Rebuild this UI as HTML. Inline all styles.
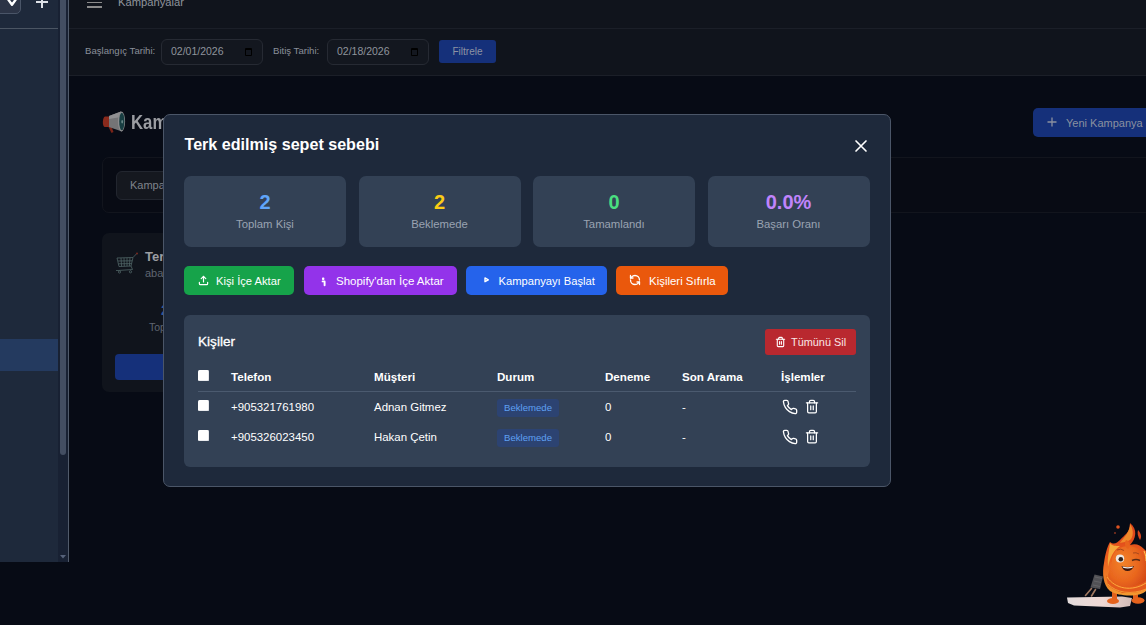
<!DOCTYPE html>
<html><head><meta charset="utf-8">
<style>
*{box-sizing:border-box;margin:0;padding:0}
html,body{width:1146px;height:625px;overflow:hidden;background:#070b15;font-family:"Liberation Sans",sans-serif}
.abs{position:absolute}
/* main (dimmed) */
#hdr{left:69px;top:0;width:1077px;height:28px;background:#10141c}
#hline{left:69px;top:28px;width:1077px;height:1px;background:#1b1f28}
#fbar{left:69px;top:29px;width:1077px;height:46px;background:#10141c}
#fline{left:69px;top:75px;width:1077px;height:1px;background:#1b1f28}
.lbl{color:#8a8f99;font-size:9.6px;white-space:nowrap}
.dinp{height:26px;border:1px solid #262a33;border-radius:6px;background:#13171f;color:#8f949c;font-size:10.5px;padding-left:9px;line-height:23px}
.dinp i{position:absolute;right:10px;top:8px;width:7px;height:8px;border:1.5px solid #000;border-top-width:2.5px;border-radius:1px}
#filt{left:439px;top:40px;width:57px;height:23px;background:#15307a;border-radius:3px;color:#8d93a3;font-size:10px;text-align:center;line-height:23px}
#ptitle{left:131px;top:111px;color:#9b9da2;font-size:19.5px;font-weight:bold;white-space:nowrap;transform:scaleX(.86);transform-origin:0 0}
#newbtn{left:1033px;top:108px;width:130px;height:29px;background:#15307a;border-radius:5px;color:#8a90a0;font-size:11px;line-height:30px}
#scard{left:102px;top:157px;width:1100px;height:56px;border:1px solid #12151d;border-radius:7px;background:#080b14}
#sinp{left:116px;top:171px;width:200px;height:29px;border:1px solid #22262f;border-radius:6px;background:#15181f;color:#7f838b;font-size:11px;line-height:27px;padding-left:13px}
#ccard{left:102px;top:233px;width:200px;height:159px;border-radius:7px;background:#10141c}
/* sidebar */
#side{left:0;top:0;width:68px;height:562px;background:#1e293b}
#sborder{left:68px;top:0;width:1px;height:562px;background:#515b6b}
#strack{left:58px;top:0;width:10px;height:562px;background:#182133}
#sthumb{left:60px;top:-10px;width:6px;height:465px;background:#434e62;border-radius:3px}
#ssel{left:-10px;top:-20px;width:31px;height:34px;background:#2c3446;border:1px solid #4a5568;border-radius:5px}
#sline{left:0;top:28px;width:58px;height:1px;background:#4b5563}
#shl{left:0;top:339px;width:58px;height:32px;background:#243a5f}
/* modal */
#modal{left:163px;top:114px;width:728px;height:373px;background:#1e293b;border:1px solid #4b5668;border-radius:7px}
#mtitle{left:184.5px;top:135px;color:#fff;font-size:16.1px;font-weight:bold;white-space:nowrap}
.stat{top:176px;width:162px;height:71px;background:#334155;border-radius:7px;text-align:center}
.stat b{display:block;position:absolute;left:0;right:0;top:16px;font-size:20px;line-height:21px}
.stat span{display:block;position:absolute;left:0;right:0;top:42px;font-size:11.3px;color:#9aa3b2;line-height:13px}
.btn{top:266px;height:29px;border-radius:5px;color:#fff;font-size:11.2px;line-height:31px;white-space:nowrap}
.btn svg{position:absolute}
#tcard{left:184px;top:315px;width:686px;height:152px;background:#334155;border-radius:6px}
.th{top:370px;color:#fff;font-size:11.6px;font-weight:bold;white-space:nowrap}
.td{color:#fff;font-size:11.45px;white-space:nowrap}
.cb{width:10.5px;height:10.5px;background:#fff;border-radius:1.5px;box-shadow:inset -0.6px -0.6px 0 #d5d8dd}
.badge{width:62px;height:18px;background:#2c4372;border-radius:3px;color:#5fa0f2;font-size:9.6px;line-height:18px;padding-left:7px}
</style></head><body>
<!-- main header -->
<div class="abs" id="hdr"></div>
<div class="abs" id="hline"></div>
<div class="abs" id="fbar"></div>
<div class="abs" id="fline"></div>
<!-- hamburger -->
<div class="abs" style="left:87px;top:-3px;width:15px;height:1.6px;background:#8c8c8c"></div>
<div class="abs" style="left:87px;top:1.5px;width:15px;height:1.6px;background:#8c8c8c"></div>
<div class="abs" style="left:87px;top:6px;width:15px;height:1.6px;background:#8c8c8c"></div>
<div class="abs lbl" style="left:118px;top:-4px;font-size:11.2px;color:#8f949d">Kampanyalar</div>
<!-- filter -->
<div class="abs lbl" style="left:85px;top:45px">Başlangıç Tarihi:</div>
<div class="abs dinp" style="left:161px;top:39px;width:102px">02/01/2026<i></i></div>
<div class="abs lbl" style="left:273px;top:45px">Bitiş Tarihi:</div>
<div class="abs dinp" style="left:327px;top:39px;width:102px">02/18/2026<i></i></div>
<div class="abs" id="filt">Filtrele</div>
<!-- page -->
<svg class="abs" style="left:100px;top:108px" width="28" height="28" viewBox="0 0 28 28">
 <path d="M8 18 L11.5 25 L13.5 24 L11 17.5Z" fill="#7a2418"/>
 <path d="M5 8.5 C2.5 9 2 18 4.5 19 L10 19 L10 8.5Z" fill="#8a2a1c"/>
 <path d="M9 8 L21 3.5 L22 23.5 L9 19Z" fill="#747476"/>
 <path d="M9 8 L21 3.5 L21 9 L9 11Z" fill="#909092"/>
 <ellipse cx="21.5" cy="13.5" rx="3.6" ry="10" fill="#8c8c8e"/>
 <ellipse cx="21.8" cy="13.5" rx="2.6" ry="8.8" fill="#183e42"/>
 <ellipse cx="22.2" cy="13.8" rx="0.9" ry="1.8" fill="#6a8a8a"/>
</svg>
<div class="abs" id="ptitle">Kampanyalar</div>
<div class="abs" id="newbtn"><svg style="position:absolute;left:14px;top:9px" width="10" height="10" viewBox="0 0 10 10"><path d="M5 0.5v9M0.5 5h9" stroke="#8a90a0" stroke-width="1.3"/></svg><span style="position:absolute;left:33px">Yeni Kampanya</span></div>
<div class="abs" id="scard"></div>
<div class="abs" id="sinp">Kampanya ara...</div>
<div class="abs" id="ccard"></div>
<svg class="abs" style="left:114px;top:251px" width="26" height="25" viewBox="0 0 26 25" fill="none" stroke="#4f6466" stroke-width="0.8">
 <path d="M3 7 L19 6.5 L17 15 L5 15.5 Z"/>
 <path d="M4 10 L18.2 9.8 M4.5 12.8 L17.6 12.6 M7 7 L7.6 15.4 M10 6.9 L10.3 15.3 M13 6.8 L13 15.2 M16 6.7 L15.4 15.1"/>
 <path d="M19 6.5 L22.5 2.8"/>
 <path d="M17 15 L18.5 18.5 L4 19.5 M2 19.5 L4 19.5"/>
 <circle cx="5.5" cy="21" r="1.1"/><circle cx="16.5" cy="20.8" r="1.1"/>
 <circle cx="23" cy="2.5" r="1" fill="#7a2a22" stroke="none"/>
</svg>
<div class="abs" style="left:145px;top:249px;color:#9b9da2;font-size:13px;font-weight:bold">Terk edilmiş</div>
<div class="abs" style="left:145px;top:267px;color:#5f6570;font-size:11px">abandoned</div>
<div class="abs" style="left:115px;top:354px;width:200px;height:26px;background:#15307a;border-radius:4px"></div>
<div class="abs" style="left:161px;top:302px;color:#2b5aa0;font-size:14px;font-weight:bold;line-height:16px">2</div>
<div class="abs" style="left:149px;top:321px;color:#5f6570;font-size:10.5px;line-height:12px">Toplam</div>

<!-- sidebar -->
<div class="abs" id="side"></div>
<div class="abs" id="strack"></div>
<div class="abs" id="sthumb"></div>
<div class="abs" id="sborder"></div>
<div class="abs" id="ssel"></div>
<svg class="abs" style="left:5px;top:-3px" width="14" height="10" viewBox="0 0 14 10"><path d="M2.5 1.5 7 7.8 11.5 1.5" fill="none" stroke="#fff" stroke-width="2.4" stroke-linecap="round" stroke-linejoin="round"/></svg>
<div class="abs" style="left:36px;top:1px;width:12px;height:2px;background:#dde1e7"></div>
<div class="abs" style="left:41px;top:-2px;width:2px;height:10px;background:#dde1e7"></div>
<div class="abs" id="sline"></div>
<div class="abs" id="shl"></div>
<svg class="abs" style="left:60px;top:555px" width="6" height="4" viewBox="0 0 6 4"><path d="M0 0h6L3 3.5z" fill="#56627a"/></svg>
<!-- modal -->
<div class="abs" id="modal"></div>
<div class="abs" id="mtitle">Terk edilmiş sepet sebebi</div>
<svg class="abs" style="left:850.5px;top:136px" width="20" height="20" viewBox="0 0 24 24" fill="none" stroke="#fff" stroke-width="2" stroke-linecap="round"><path d="M18 6 6 18M6 6l12 12"/></svg>
<!-- stats -->
<div class="abs stat" style="left:184px"><b style="color:#60a5fa">2</b><span>Toplam Kişi</span></div>
<div class="abs stat" style="left:358.5px"><b style="color:#facc15">2</b><span>Beklemede</span></div>
<div class="abs stat" style="left:533px"><b style="color:#4ade80">0</b><span>Tamamlandı</span></div>
<div class="abs stat" style="left:707.5px"><b style="color:#c084fc">0.0%</b><span>Başarı Oranı</span></div>
<!-- buttons -->
<div class="abs btn" style="left:184px;width:110px;background:#16a34a">
 <svg style="left:14px;top:9px" width="11" height="11" viewBox="0 0 24 24" fill="none" stroke="#fff" stroke-width="2.6" stroke-linecap="round" stroke-linejoin="round"><path d="M3 16v3a2 2 0 0 0 2 2h14a2 2 0 0 0 2-2v-3"/><path d="M17 8l-5-5-5 5"/><path d="M12 3v12"/></svg>
 <span style="position:absolute;left:32px">Kişi İçe Aktar</span></div>
<div class="abs btn" style="left:304px;width:153px;background:#9333ea">
 <svg style="left:17px;top:11px" width="6" height="10" viewBox="0 0 6 10"><rect x="1" y="0.6" width="2.4" height="2.4" rx="0.8" fill="#fff"/><path d="M1.6 4.4H3.6V8.2" stroke="#fff" stroke-width="1.9" fill="none" stroke-linecap="round" stroke-linejoin="round"/></svg>
 <span style="position:absolute;left:32px;font-size:11.5px">Shopify'dan İçe Aktar</span></div>
<div class="abs btn" style="left:466px;width:141px;background:#2563eb">
 <svg style="left:17.5px;top:11.2px" width="6" height="6" viewBox="0 0 6 6"><path d="M1 0.9 4.3 2.8 1 4.7Z" fill="none" stroke="#fff" stroke-width="1.4" stroke-linejoin="round"/></svg>
 <span style="position:absolute;left:32.5px">Kampanyayı Başlat</span></div>
<div class="abs btn" style="left:616px;width:112px;background:#ea580c">
 <svg style="left:13.4px;top:8.4px" width="12" height="12" viewBox="0 0 24 24" fill="none" stroke="#fff" stroke-width="2.6" stroke-linecap="round" stroke-linejoin="round"><path d="M21 12a9 9 0 0 0-9-9 9.75 9.75 0 0 0-6.74 2.74L3 8"/><path d="M3 3v5h5"/><path d="M3 12a9 9 0 0 0 9 9 9.75 9.75 0 0 0 6.74-2.74L21 16"/><path d="M16 16h5v5"/></svg>
 <span style="position:absolute;left:33px;font-size:11.45px">Kişileri Sıfırla</span></div>
<!-- table card -->
<div class="abs" id="tcard"></div>
<div class="abs" style="left:198px;top:334px;color:#fff;font-size:13.6px;white-space:nowrap;-webkit-text-stroke:0.3px #fff">Kişiler</div>
<div class="abs" style="left:765px;top:329px;width:91px;height:26px;background:#b9282f;border-radius:3px;color:#fae6e6;font-size:10.9px;line-height:26px">
 <svg style="position:absolute;left:10px;top:7px" width="11" height="12" viewBox="0 0 24 24" fill="none" stroke="#fff" stroke-width="2.4" stroke-linecap="round" stroke-linejoin="round"><path d="M3 6h18"/><path d="M19 6v14a2 2 0 0 1-2 2H7a2 2 0 0 1-2-2V6"/><path d="M8 6V4a2 2 0 0 1 2-2h4a2 2 0 0 1 2 2v2"/><path d="M10 11v6M14 11v6"/></svg>
 <span style="position:absolute;left:26px">Tümünü Sil</span></div>
<div class="abs cb" style="left:198px;top:370px"></div>
<div class="abs th" style="left:231px">Telefon</div>
<div class="abs th" style="left:374px">Müşteri</div>
<div class="abs th" style="left:497px">Durum</div>
<div class="abs th" style="left:605px">Deneme</div>
<div class="abs th" style="left:682px">Son Arama</div>
<div class="abs th" style="left:781px">İşlemler</div>
<div class="abs" style="left:198px;top:391px;width:658px;height:1px;background:#4b5a6f"></div>
<!-- rows -->
<div class="abs cb" style="left:198px;top:400px"></div>
<div class="abs td" style="left:231px;top:401px">+905321761980</div>
<div class="abs td" style="left:374px;top:401px">Adnan Gitmez</div>
<div class="abs badge" style="left:497px;top:399px">Beklemede</div>
<div class="abs td" style="left:605px;top:401px">0</div>
<div class="abs td" style="left:682px;top:401px">-</div>
<svg class="abs" style="left:782px;top:399.3px" width="16" height="16" viewBox="0 0 24 24" fill="none" stroke="#fff" stroke-width="2" stroke-linecap="round" stroke-linejoin="round"><path d="M22 16.92v3a2 2 0 0 1-2.18 2 19.79 19.79 0 0 1-8.63-3.07 19.5 19.5 0 0 1-6-6 19.79 19.79 0 0 1-3.07-8.67A2 2 0 0 1 4.11 2h3a2 2 0 0 1 2 1.72c.127.96.361 1.903.7 2.81a2 2 0 0 1-.45 2.11L8.09 9.91a16 16 0 0 0 6 6l1.27-1.27a2 2 0 0 1 2.11-.45c.907.339 1.85.573 2.81.7A2 2 0 0 1 22 16.92z"/></svg>
<svg class="abs" style="left:804px;top:399.3px" width="16" height="15" viewBox="0 0 24 24" fill="none" stroke="#fff" stroke-width="2" stroke-linecap="round" stroke-linejoin="round"><path d="M3 6h18"/><path d="M19 6v14a2 2 0 0 1-2 2H7a2 2 0 0 1-2-2V6"/><path d="M8 6V4a2 2 0 0 1 2-2h4a2 2 0 0 1 2 2v2"/><path d="M10 11v6M14 11v6"/></svg>
<div class="abs cb" style="left:198px;top:430px"></div>
<div class="abs td" style="left:231px;top:431px">+905326023450</div>
<div class="abs td" style="left:374px;top:431px">Hakan Çetin</div>
<div class="abs badge" style="left:497px;top:429px">Beklemede</div>
<div class="abs td" style="left:605px;top:431px">0</div>
<div class="abs td" style="left:682px;top:431px">-</div>
<svg class="abs" style="left:782px;top:429.3px" width="16" height="16" viewBox="0 0 24 24" fill="none" stroke="#fff" stroke-width="2" stroke-linecap="round" stroke-linejoin="round"><path d="M22 16.92v3a2 2 0 0 1-2.18 2 19.79 19.79 0 0 1-8.63-3.07 19.5 19.5 0 0 1-6-6 19.79 19.79 0 0 1-3.07-8.67A2 2 0 0 1 4.11 2h3a2 2 0 0 1 2 1.72c.127.96.361 1.903.7 2.81a2 2 0 0 1-.45 2.11L8.09 9.91a16 16 0 0 0 6 6l1.27-1.27a2 2 0 0 1 2.11-.45c.907.339 1.85.573 2.81.7A2 2 0 0 1 22 16.92z"/></svg>
<svg class="abs" style="left:804px;top:429.3px" width="16" height="15" viewBox="0 0 24 24" fill="none" stroke="#fff" stroke-width="2" stroke-linecap="round" stroke-linejoin="round"><path d="M3 6h18"/><path d="M19 6v14a2 2 0 0 1-2 2H7a2 2 0 0 1-2-2V6"/><path d="M8 6V4a2 2 0 0 1 2-2h4a2 2 0 0 1 2 2v2"/><path d="M10 11v6M14 11v6"/></svg>

<!-- mascot -->
<svg class="abs" style="left:1060px;top:515px" width="86" height="100" viewBox="0 0 86 100">
 <defs>
  <radialGradient id="bodyg" cx="0.4" cy="0.35" r="0.75"><stop offset="0" stop-color="#f2822a"/><stop offset="0.55" stop-color="#e9661e"/><stop offset="1" stop-color="#cf4214"/></radialGradient>
  <linearGradient id="plat" x1="0" y1="0" x2="1" y2="0"><stop offset="0" stop-color="#e3dcdc"/><stop offset="0.55" stop-color="#efd8d3"/><stop offset="1" stop-color="#d2bcb8"/></linearGradient>
  <linearGradient id="flm" x1="0" y1="0" x2="0" y2="1"><stop offset="0" stop-color="#d8401a"/><stop offset="0.45" stop-color="#ea5a1c"/><stop offset="1" stop-color="#f39a30"/></linearGradient>
  <filter id="blr" x="-20%" y="-20%" width="140%" height="140%"><feGaussianBlur stdDeviation="0.45"/></filter>
 </defs>
 <g filter="url(#blr)">
 <path d="M7 82.5 L62 81.5 L72 83 L70 91 L60 92.5 L14 90.5 L8 88 Z" fill="url(#plat)"/>
 <path d="M34.5 59.5 L43 61.5 L40 74 L30.5 72.5 Z" fill="#515154"/>
 <path d="M35 62 L42 63.5 M34 66 L41 67.5 M33 70 L40 71.5" stroke="#6c6c70" stroke-width="0.7"/>
 <path d="M31.5 73.5 L25.5 80.5 M35.5 74.5 L31.5 81" stroke="#a07860" stroke-width="1.6" stroke-linecap="round"/>
 <path d="M52 76 L57 76 L57 84 L52 84Z M73 76 L78 76 L78 84 L73 84Z" fill="#e2601c"/>
 <ellipse cx="53" cy="86" rx="6" ry="3" fill="#e5621e"/>
 <ellipse cx="78" cy="85.5" rx="6.5" ry="3.2" fill="#e5621e"/>
 <path d="M70 8 C78 14 76 24 70 30 C76 28 80 30 84 34 L86 36 L86 76 C80 82 60 82 50 76 C43 70 42 58 44 48 C45 40 47 32 50 27 C54 30 57 28 60 25 C64 20 70 18 70 8 Z" fill="url(#flm)"/>
 <path d="M50 28 C49 36 47 44 48 52 C50 42 54 35 60 31 C56 31 52 31 50 28 Z" fill="#f7a83a"/>
 <path d="M70 9 C70 17 64 22 60 28 C66 27 69 26 71 24 C74 20 73 13 70 9 Z" fill="#f08a2a"/>
 <path d="M78 15 C81 18 82 22 80 25 C78 22 77 18 78 15 Z" fill="#d8461c"/>
 <circle cx="58" cy="12" r="1.8" fill="#dd5220"/>
 <circle cx="55" cy="18" r="0.8" fill="#dd5220"/>
 <path d="M52 46 C52 36 60 31 68 31 C78 31 86 38 86 48 L86 66 C82 74 74 78 66 78 C56 78 49 70 48 60 Z" fill="url(#bodyg)"/>
 <path d="M66 25 C70 26 71 31 68 34 C65 32 64 28 66 25 Z" fill="#e8641e"/>
 <path d="M46 60 C52 72 70 76 86 66 L86 74 C76 80 58 80 48 70 Z" fill="#e45a1c"/>
 <path d="M47 62 C55 74 72 77 86 68" stroke="#ffb640" stroke-width="0.9" fill="none"/>
 <path d="M48 69 C56 78 72 80 86 74" stroke="#f8a83a" stroke-width="0.8" fill="none"/>
 <path d="M84 36 C86 40 86 44 86 46" stroke="#ffc850" stroke-width="1" fill="none"/>
 <ellipse cx="60" cy="43.5" rx="4.2" ry="4" fill="#eee7e2"/>
 <circle cx="60.8" cy="44.2" r="2.3" fill="#33241c"/>
 <path d="M57 35 Q61 33 64 35.5" stroke="#a8481a" stroke-width="1" fill="none"/>
 <path d="M72 45.5 Q76 43.5 80 45.5" stroke="#5a2c18" stroke-width="1.5" fill="none"/>
 <path d="M73 38 Q76 37 79 39" stroke="#a8481a" stroke-width="1" fill="none"/>
 <path d="M61.5 51 Q67.5 53 74 51 Q72 56 67.5 56 Q63 56 61.5 51 Z" fill="#3a1810"/>
 <path d="M62.5 51.6 Q67.5 53 73 51.6 L72.5 52.8 Q67.5 54 63 52.8Z" fill="#f4f0ee"/>
 </g>
</svg>
</body></html>
